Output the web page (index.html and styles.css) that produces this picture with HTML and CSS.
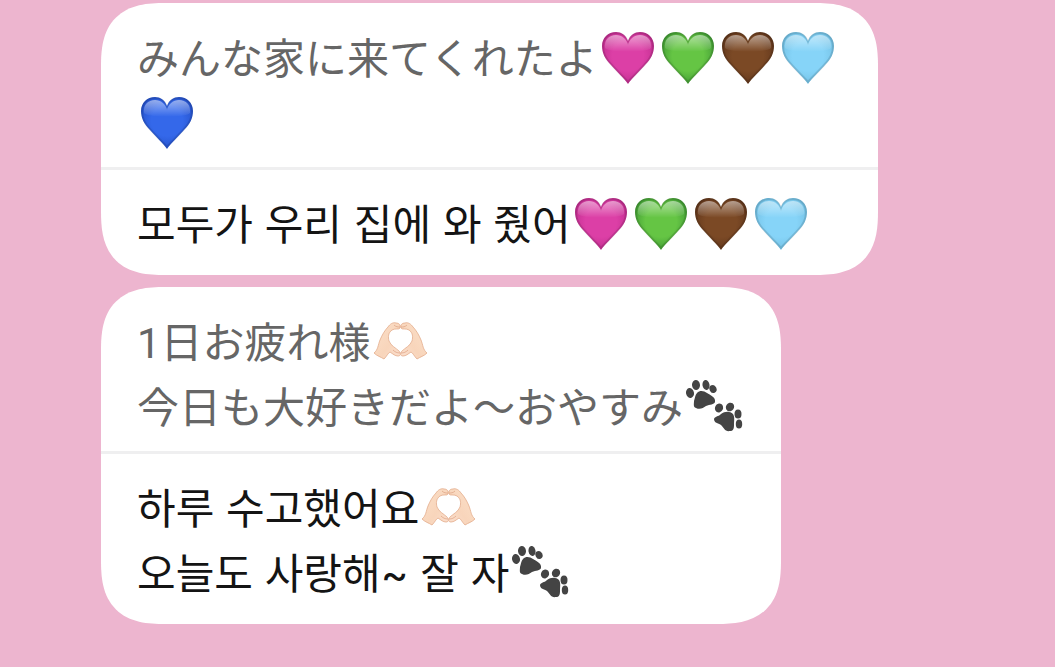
FILE: index.html
```
<!DOCTYPE html>
<html lang="ja">
  <head>
    <meta charset="UTF-8" />
    <meta name="viewport" content="width=device-width, initial-scale=1.0" />
    <link rel="stylesheet" href="styles.css">
    <title>Messages</title>
  </head>
  <body>
    <!-- emoji shapes -->
    <svg class="defs" width="0" height="0" aria-hidden="true">
      <defs>
        <linearGradient id="shine" x1="0" y1="0" x2="0" y2="1">
          <stop offset="0" stop-color="#fff" stop-opacity="0.5" />
          <stop offset="0.4" stop-color="#fff" stop-opacity="0.3" />
          <stop offset="1" stop-color="#fff" stop-opacity="0" />
        </linearGradient>
        <linearGradient id="skin" x1="0" y1="0" x2="1" y2="1">
          <stop offset="0" stop-color="#fbe0c9" />
          <stop offset="0.6" stop-color="#f8d5bb" />
          <stop offset="1" stop-color="#fbe0d0" />
        </linearGradient>
        <radialGradient id="pink" cx="0.5" cy="0.45" r="0.6">
          <stop offset="0.5" stop-color="#dc3fa6" />
          <stop offset="1" stop-color="#bf2c8e" />
        </radialGradient>
        <radialGradient id="green" cx="0.5" cy="0.45" r="0.6">
          <stop offset="0.5" stop-color="#65c544" />
          <stop offset="1" stop-color="#3d9733" />
        </radialGradient>
        <radialGradient id="brown" cx="0.5" cy="0.45" r="0.6">
          <stop offset="0.5" stop-color="#7b4925" />
          <stop offset="1" stop-color="#5f351b" />
        </radialGradient>
        <radialGradient id="sky" cx="0.5" cy="0.45" r="0.6">
          <stop offset="0.5" stop-color="#86d4f8" />
          <stop offset="1" stop-color="#72bfe2" />
        </radialGradient>
        <radialGradient id="blue" cx="0.5" cy="0.45" r="0.6">
          <stop offset="0.5" stop-color="#3468ea" />
          <stop offset="1" stop-color="#2450c8" />
        </radialGradient>
        <symbol id="heart" viewBox="0 0 60 54">
          <path d="M30 53C26 47 19 41 13 34C7 28 4 22 4 15C4 7 10 1 18 1C23 1 28 4 30 10C32 4 37 1 42 1C50 1 56 7 56 15C56 22 53 28 47 34C41 41 34 47 30 53Z" />
          <path class="heart-edge" d="M30 51C26 46 19 40 13 33C8 28 5 22 5 15C5 7 11 2 18 2C24 2 28 5 30 11C32 5 36 2 42 2C49 2 55 7 55 15C55 22 52 28 47 33C41 40 34 46 30 51Z" />
          <path fill="url(#shine)" d="M7 17C6 9 11 4 18 4C24 4 28 8 30 13C32 8 36 4 42 4C49 4 54 9 53 17C48 22 12 22 7 17Z" />
        </symbol>
        <g id="hand">
          <path fill="url(#skin)" stroke="#e3ac8c" stroke-width="0.8" d="M3 38C7 35 7 30 9 25C11 20 14 15 17 12C19 9 22 7 25 8C28 8 30 10 29 13C28 15 24 13 21 15C17 18 17 22 18 26C20 31 25 33 28 36C30 38 30 41 27 41C24 41 22 39 19 37C17 38 16 41 13 44C10 42 6 41 3 38Z" />
          <path fill="none" stroke="#dfa789" stroke-width="0.8" d="M23 10C25 12 27 12 29 12M22 35C24 37 26 38 29 38" />
        </g>
        <symbol id="heart-hands" viewBox="0 0 60 54">
          <use href="#hand" />
          <use href="#hand" transform="matrix(-1 0 0 1 59 0)" />
        </symbol>
        <symbol id="paws" viewBox="0 0 60 54">
          <ellipse cx="7" cy="13" rx="4" ry="5" transform="rotate(-12 7 13)" />
          <ellipse cx="13" cy="5" rx="4" ry="5" transform="rotate(-5 13 5)" />
          <ellipse cx="23" cy="5" rx="3.5" ry="5" transform="rotate(-8 23 5)" />
          <ellipse cx="30" cy="9" rx="3.5" ry="4" transform="rotate(-25 30 9)" />
          <path d="M14 13C17 10 21 11 24 13C27 15 33 17 32 22C31 25 27 24 23 26C20 28 17 30 13 28C10 27 11 24 11 21C12 18 12 15 14 13Z" />
          <ellipse cx="36" cy="28" rx="4" ry="4.5" transform="rotate(30 36 28)" />
          <ellipse cx="47" cy="27" rx="4" ry="4.5" transform="rotate(35 47 27)" />
          <ellipse cx="55" cy="34" rx="3.5" ry="4.5" />
          <ellipse cx="56" cy="44" rx="3.2" ry="4.5" />
          <path d="M38 34C42 31 47 31 50 34C52 37 51 41 51 45C51 49 50 51 47 51C42 52 41 48 38 45C35 43 31 43 31 39C32 36 35 37 38 34Z" />
        </symbol>
      </defs>
    </svg>

    <main class="chat">
      <article class="bubble">
        <p class="original">みんな家に来てくれたよ<svg class="emoji pink" role="img" aria-label="pink heart"><use href="#heart" /></svg><svg class="emoji green" role="img" aria-label="green heart"><use href="#heart" /></svg><svg class="emoji brown" role="img" aria-label="brown heart"><use href="#heart" /></svg><svg class="emoji sky" role="img" aria-label="light blue heart"><use href="#heart" /></svg><svg class="emoji blue" role="img" aria-label="blue heart"><use href="#heart" /></svg></p>
        <p class="translation" lang="ko">모두가 우리 집에 와 줬어<svg class="emoji pink" role="img" aria-label="pink heart"><use href="#heart" /></svg><svg class="emoji green" role="img" aria-label="green heart"><use href="#heart" /></svg><svg class="emoji brown" role="img" aria-label="brown heart"><use href="#heart" /></svg><svg class="emoji sky" role="img" aria-label="light blue heart"><use href="#heart" /></svg></p>
      </article>

      <article class="bubble">
        <p class="original">1日お疲れ様<svg class="emoji" role="img" aria-label="heart hands"><use href="#heart-hands" /></svg><br>今日も大好きだよ〜おやすみ<svg class="emoji paws" role="img" aria-label="paw prints"><use href="#paws" /></svg></p>
        <p class="translation" lang="ko">하루 수고했어요<svg class="emoji" role="img" aria-label="heart hands"><use href="#heart-hands" /></svg><br>오늘도 사랑해~ 잘 자<svg class="emoji paws" role="img" aria-label="paw prints"><use href="#paws" /></svg></p>
      </article>
    </main>
  </body>
</html>
```
FILE: styles.css
```
* {
  margin: 0;
  padding: 0;
  box-sizing: border-box;
}
body {
  background-color: #edb5cf;
  font-size: 42px;
  line-height: 65px;
}
.defs {
  position: absolute;
}
.chat {
  display: flex;
  flex-flow: column;
  align-items: flex-start;
  gap: 12px;
  padding: 3px 177px 44px 101px;
}
.bubble {
  max-width: 100%;
  background-color: white;
  border-radius: 64px;
  corner-shape: superellipse(1.4);
  overflow: hidden;
}
.original {
  padding: 24px 38px 10px 36px;
  color: #666;
  font-family: Roboto, "Noto Sans CJK JP", sans-serif;
}
.translation {
  padding: 22px 38px 18px 36px;
  border-top: 3px solid #efeff0;
  color: #141414;
  font-family: Inter, "Noto Sans CJK KR", sans-serif;
}
.emoji {
  width: 60px;
  height: 54px;
  vertical-align: -11px;
  overflow: visible;
}
.heart-edge {
  fill: none;
  stroke: black;
  stroke-opacity: 0.12;
  stroke-width: 2;
}
.pink {
  fill: url(#pink);
}
.green {
  fill: url(#green);
}
.brown {
  fill: url(#brown);
}
.sky {
  fill: url(#sky);
}
.blue {
  fill: url(#blue);
}
.paws {
  fill: #444;
}
```
